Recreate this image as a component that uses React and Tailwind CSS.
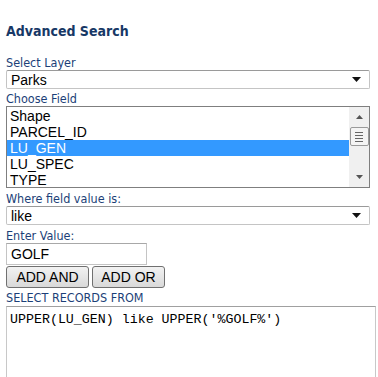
import React from "react";

const labelFont = { fontFamily: '"DejaVu Sans Condensed", "Noto Sans", sans-serif' };

function Arrow() {
  return (
    <svg width="9" height="5" viewBox="0 0 9 5" className="block">
      <path d="M0 0 H9 L4.5 5 Z" fill="#111" />
    </svg>
  );
}

function Dropdown({ value }) {
  return (
    <div className="flex h-[19px] w-[364px] items-center justify-between rounded-[2px] border border-[#c4c4c4] border-t-[#9a9a9a] bg-white pl-[4px] pr-[8px] font-['Liberation_Sans',sans-serif] text-[14px] leading-none text-black">
      <span>{value}</span>
      <Arrow />
    </div>
  );
}

export default function App() {
  const items = ["Shape", "PARCEL_ID", "LU_GEN", "LU_SPEC", "TYPE"];
  return (
    <div className="h-[377px] w-[378px] overflow-hidden bg-white pl-[6px]">
      <div
        className="pt-[22px] text-[14px] font-bold leading-[18px] text-[#173866]"
        style={labelFont}
      >
        Advanced Search
      </div>
      <div className="mt-[16px] text-[12.5px] leading-[14px] text-[#1c3f78]" style={labelFont}>
        Select Layer
      </div>
      <Dropdown value="Parks" />
      <div className="mt-[3px] text-[12.5px] leading-[14px] text-[#1c3f78]" style={labelFont}>
        Choose Field
      </div>
      <div className="flex h-[82px] w-[364px] border border-[#7f7f7f] bg-white">
        <div className="flex-1 pt-[1px] font-['Liberation_Sans',sans-serif] text-[14px] leading-[16px] text-black">
          {items.map((it) => (
            <div
              key={it}
              className={
                it === "LU_GEN"
                  ? "h-[16px] bg-[#3399ff] pl-[3px] text-white"
                  : "h-[16px] pl-[3px]"
              }
            >
              {it}
            </div>
          ))}
        </div>
        <div className="flex w-[20px] flex-col items-center bg-[#f0f0f0]">
          <div className="flex h-[20px] items-center justify-center">
            <svg width="7" height="4" viewBox="0 0 7 4">
              <path d="M0 4 L3.5 0 L7 4 Z" fill="#555" />
            </svg>
          </div>
          <div className="flex h-[19px] w-[19px] flex-col items-center justify-center gap-[2px] rounded-[2px] border border-[#9a9a9a] bg-[#f4f4f4]">
            <div className="h-[1px] w-[8px] bg-[#666]" />
            <div className="h-[1px] w-[8px] bg-[#666]" />
            <div className="h-[1px] w-[8px] bg-[#666]" />
            <div className="h-[1px] w-[8px] bg-[#666]" />
          </div>
          <div className="flex-1" />
          <div className="flex h-[20px] items-center justify-center">
            <svg width="7" height="4" viewBox="0 0 7 4">
              <path d="M0 0 L7 0 L3.5 4 Z" fill="#555" />
            </svg>
          </div>
        </div>
      </div>
      <div className="mt-[4px] text-[12.5px] leading-[14px] text-[#1c3f78]" style={labelFont}>
        Where field value is:
      </div>
      <Dropdown value="like" />
      <div className="mt-[4px] text-[12.5px] leading-[14px] text-[#1c3f78]" style={labelFont}>
        Enter Value:
      </div>
      <div className="flex h-[22px] w-[141px] items-center border border-[#c4c4c4] border-t-[#a8a8a8] bg-white pl-[4px] font-['Liberation_Sans',sans-serif] text-[14px] text-black">
        GOLF
      </div>
      <div className="mt-[1px] flex gap-[3px]">
        <div className="flex h-[22px] w-[83px] items-center justify-center rounded-[3px] border border-[#707070] bg-gradient-to-b from-[#f2f2f2] to-[#d9d9d9] font-['Liberation_Sans',sans-serif] text-[14px] text-black">
          ADD AND
        </div>
        <div className="flex h-[22px] w-[73px] items-center justify-center rounded-[3px] border border-[#707070] bg-gradient-to-b from-[#f2f2f2] to-[#d9d9d9] font-['Liberation_Sans',sans-serif] text-[14px] text-black">
          ADD OR
        </div>
      </div>
      <div className="mt-[3px] text-[12.5px] leading-[14px] text-[#1c3f78]" style={labelFont}>
        SELECT RECORDS FROM
      </div>
      <div className="mt-[1px] h-[80px] w-[370px] border border-[#c8c8c8] border-t-[#a0a0a0] bg-white pl-[3px] pt-[5px] font-['Liberation_Mono',monospace] text-[13.3px] leading-[15px] text-black">
        UPPER(LU_GEN) like UPPER('%GOLF%')
      </div>
    </div>
  );
}
